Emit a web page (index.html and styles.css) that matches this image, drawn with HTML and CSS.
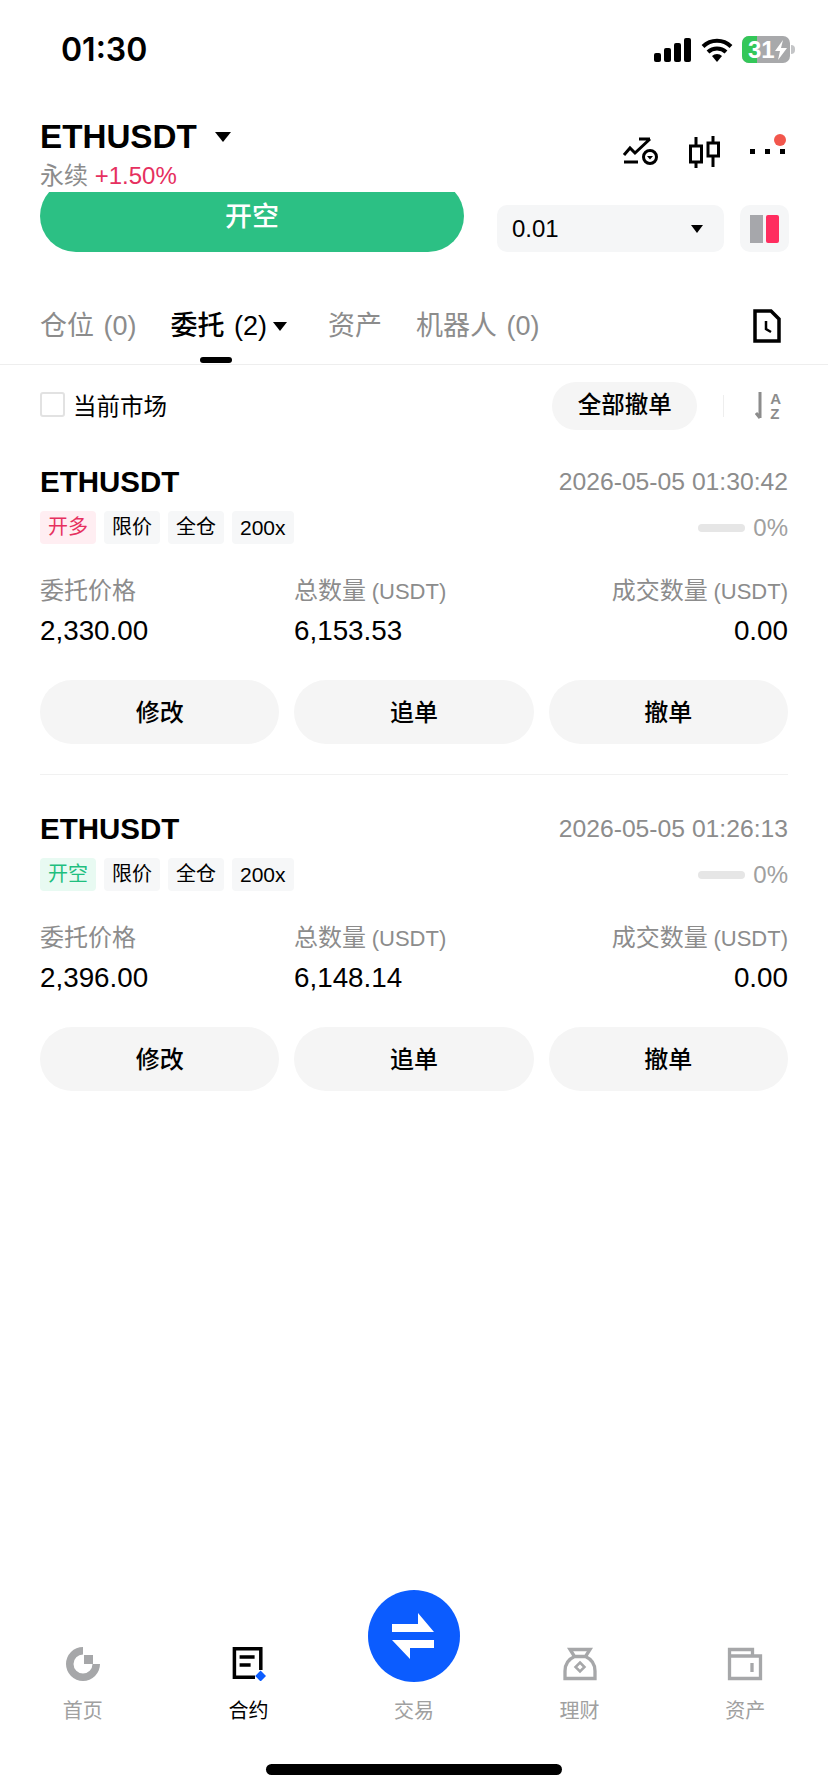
FILE: index.html
```html
<!DOCTYPE html>
<html lang="zh">
<head>
    <meta charset="UTF-8">
    <meta name="viewport" content="width=device-width, initial-scale=1.0">
    <title>ETHUSDT 合约</title>
    <link rel="stylesheet" href="styles.css">
</head>
<body>
    <div class="page">
        <div class="status-bar">
            <span class="time">01:30</span>
            <div class="status-icons">
                <svg width="38" height="24" viewBox="0 0 38 24"><rect x="0" y="15" width="7" height="9" rx="2"/><rect x="10" y="10" width="7" height="14" rx="2"/><rect x="20" y="5" width="7" height="19" rx="2"/><rect x="30" y="0" width="7" height="24" rx="2"/></svg>
                <svg width="32" height="24" viewBox="0 0 32 24"><path d="M16 24l-5-6a7 7 0 0 1 10 0z"/><path d="M2 8.500a20 20 0 0 1 28 0M7 14a13 13 0 0 1 18 0" fill="none" stroke="#000" stroke-width="4"/></svg>
                <div class="battery">
                    <span class="battery-level"></span>
                    <span class="battery-text">31<svg width="12" height="20" viewBox="0 0 12 20"><path d="M8 0L0 11h5l-2 9 9-12H6z" fill="#fff"/></svg></span>
                </div>
                <span class="battery-tip"></span>
            </div>
        </div>

        <div class="header">
            <div>
                <div class="symbol">ETHUSDT<span class="caret caret-lg"></span></div>
                <div class="symbol-sub">永续 <span class="pink">+1.50%</span></div>
            </div>
            <div class="header-icons">
                <svg width="36" height="30" viewBox="0 0 36 30" fill="none" stroke="#000" stroke-width="3"><path d="M2 19l6-7 5 5L28 3M17 3h11M2 26h14"/><circle cx="28" cy="21" r="6.500"/><path d="M25 20h6l-3 3.500z" fill="#000" stroke="none"/></svg>
                <svg width="32" height="32" viewBox="0 0 32 32" fill="none" stroke="#000" stroke-width="3"><rect x="1.500" y="10" width="11" height="16"/><path d="M7 1v9M7 26v6"/><rect x="19" y="7" width="10.500" height="13"/><path d="M24 0v7M24 20v11"/></svg>
                <div class="more">
                    <span class="more-dot"></span><span class="more-dot"></span><span class="more-dot"></span>
                    <span class="red-dot"></span>
                </div>
            </div>
        </div>

        <div class="trade-row">
            <div class="open-clip"><div class="open-btn">开空</div></div>
            <div class="size-select">0.01<span class="caret caret-sm"></span></div>
            <div class="layout-btn"><span class="bar-grey"></span><span class="bar-pink"></span></div>
        </div>

        <div class="tabs">
            <span class="tab">仓位 (0)</span>
            <span class="tab tab-active">委托 (2)<span class="caret caret-md"></span></span>
            <span class="tab">资产</span>
            <span class="tab">机器人 (0)</span>
            <svg class="tab-doc" width="28" height="34" viewBox="0 0 28 34" fill="none" stroke="#000" stroke-width="3.500"><path d="M2 2h16l8 8v22H2z"/><path d="M13 12v8l5 3" stroke-width="2.500"/></svg>
        </div>

        <div class="filter-row">
            <label class="market"><span class="checkbox"></span>当前市场</label>
            <div class="cancel-all">全部撤单</div>
            <span class="filter-sep"></span>
            <div class="sort-icon">
                <svg width="10" height="28" viewBox="0 0 10 28" fill="none" stroke="#8c8c8c" stroke-width="3"><path d="M5 0v26M1 21l4 5"/></svg>
                <div class="sort-letters"><span>A</span><span>Z</span></div>
            </div>
        </div>

        <div class="order">
            <div class="order-top">
                <span class="order-name">ETHUSDT</span>
                <span class="order-date">2026-05-05 01:30:42</span>
            </div>
            <div class="order-tags">
                <span class="tag tag-long">开多</span>
                <span class="tag">限价</span>
                <span class="tag">全仓</span>
                <span class="tag tag-lev">200x</span>
                <span class="progress"></span>
                <span class="percent">0%</span>
            </div>
            <div class="order-grid">
                <span class="label">委托价格</span>
                <span class="label">总数量 <span class="unit">(USDT)</span></span>
                <span class="label right">成交数量 <span class="unit">(USDT)</span></span>
                <span class="value">2,330.00</span>
                <span class="value">6,153.53</span>
                <span class="value right">0.00</span>
            </div>
            <div class="order-btns">
                <div class="order-btn">修改</div>
                <div class="order-btn">追单</div>
                <div class="order-btn">撤单</div>
            </div>
        </div>

        <div class="order order-last">
            <div class="order-top">
                <span class="order-name">ETHUSDT</span>
                <span class="order-date">2026-05-05 01:26:13</span>
            </div>
            <div class="order-tags">
                <span class="tag tag-short">开空</span>
                <span class="tag">限价</span>
                <span class="tag">全仓</span>
                <span class="tag tag-lev">200x</span>
                <span class="progress"></span>
                <span class="percent">0%</span>
            </div>
            <div class="order-grid">
                <span class="label">委托价格</span>
                <span class="label">总数量 <span class="unit">(USDT)</span></span>
                <span class="label right">成交数量 <span class="unit">(USDT)</span></span>
                <span class="value">2,396.00</span>
                <span class="value">6,148.14</span>
                <span class="value right">0.00</span>
            </div>
            <div class="order-btns">
                <div class="order-btn">修改</div>
                <div class="order-btn">追单</div>
                <div class="order-btn">撤单</div>
            </div>
        </div>

        <div class="spacer"></div>

        <div class="tabbar">
            <div class="nav-item">
                <svg class="nav-icon" width="36" height="34" viewBox="0 0 36 34"><path d="M18 0v7.500A9.500 9.500 0 1 0 27.500 17H35A17 17 0 1 1 18 0z" fill="#a6a7a9"/><rect x="19" y="8" width="9" height="9" fill="#a6a7a9"/></svg>
                <span class="nav-label">首页</span>
            </div>
            <div class="nav-item nav-active">
                <svg class="nav-icon" width="36" height="34" viewBox="0 0 36 34"><path d="M30.800 23V1.750H4.400V30.250H25" fill="none" stroke="#000" stroke-width="3.500"/><path d="M9.600 10h15M9.600 18h11" stroke="#000" stroke-width="3.500"/><path d="M30.600 23.500l5.400 5.500-5.400 5.500-5.400-5.500z" fill="#0b5cff"/></svg>
                <span class="nav-label">合约</span>
            </div>
            <div class="nav-item">
                <div class="swap-circle">
                    <svg width="46" height="46" viewBox="0 0 46 46" fill="#fff"><path d="M27 0l16 19H1v-8h26z"/><path d="M19 46L1 27h42v8H19z"/></svg>
                </div>
                <span class="nav-label">交易</span>
            </div>
            <div class="nav-item">
                <svg class="nav-icon" width="36" height="34" viewBox="0 0 36 34" fill="none" stroke="#a6a7a9" stroke-width="3.300"><path d="M8 2.500h20l-4.500 7h-11zM12.500 9.500C7 12 3 17 3 24v7.500h30V24c0-7-4-12-9.500-14.500"/><path d="M18 15.500l4.500 4.500-4.500 4.500-4.500-4.500z" stroke-width="2.500"/></svg>
                <span class="nav-label">理财</span>
            </div>
            <div class="nav-item">
                <svg class="nav-icon" width="36" height="34" viewBox="0 0 36 34" fill="none" stroke="#a6a7a9" stroke-width="3.300"><path d="M2.500 31.500V2.500h23V9h8v22.500zM2.500 9h23M25 16v9"/></svg>
                <span class="nav-label">资产</span>
            </div>
        </div>

        <div class="home-row"><span class="home-bar"></span></div>
    </div>
</body>
</html>
```

FILE: styles.css
```css
body {
    margin: 0;
    padding: 0;
    background-color: #fff;
    color: #000;
    font-family: "Liberation Sans", "Noto Sans CJK SC", sans-serif;
}
.page {
    width: 828px;
    height: 1792px;
    display: flex;
    flex-direction: column;
    overflow: hidden;
}
.status-bar {
    height: 98px;
    flex-shrink: 0;
    display: flex;
    justify-content: space-between;
    align-items: flex-start;
    padding: 32px 33px 0 61px;
    box-sizing: border-box;
}
.time {
    font-family: Inter, sans-serif;
    font-size: 32px;
    font-weight: 600;
    line-height: 36px;
}
.status-icons {
    display: flex;
    align-items: center;
    gap: 9px;
    margin-top: 4px;
}
.battery {
    width: 48px;
    height: 27px;
    background-color: #a8a9ab;
    border-radius: 7px;
    position: relative;
    overflow: hidden;
    display: flex;
    align-items: center;
}
.battery-level {
    position: absolute;
    left: 0;
    top: 0;
    bottom: 0;
    width: 15px;
    background-color: #34c759;
}
.battery-text {
    position: relative;
    display: flex;
    align-items: center;
    padding-left: 6px;
    color: #fff;
    font-size: 24px;
    font-weight: bold;
}
.battery-tip {
    width: 4px;
    height: 9px;
    margin-left: -8px;
    background-color: #c4c5c7;
    border-radius: 0 4px 4px 0;
}
.header {
    height: 94px;
    flex-shrink: 0;
    display: flex;
    justify-content: space-between;
    padding: 18px 38px 0 40px;
    box-sizing: border-box;
}
.symbol {
    display: flex;
    align-items: center;
    font-size: 33.200px;
    font-weight: bold;
    line-height: 42px;
}
.symbol-sub {
    margin-top: 3px;
    font-size: 24px;
    line-height: 30px;
    color: #8c8c8c;
}
.pink {
    color: #e6305f;
}
.caret {
    display: inline-block;
    width: 0;
    height: 0;
    border-style: solid;
    border-color: #000 transparent transparent transparent;
}
.caret-lg {
    border-width: 10px 8px 0 8px;
    margin-left: 18px;
}
.caret-md {
    border-width: 9px 7px 0 7px;
    margin-left: 6px;
}
.caret-sm {
    border-width: 8px 6px 0 6px;
}
.header-icons {
    display: flex;
    align-items: flex-start;
    gap: 31px;
    padding-top: 20px;
}
.more {
    display: flex;
    gap: 10px;
    width: 40px;
    margin-left: -2px;
    padding-top: 13px;
    position: relative;
}
.more-dot {
    width: 5px;
    height: 5px;
    background-color: #000;
}
.red-dot {
    position: absolute;
    left: 24px;
    top: -2px;
    width: 12px;
    height: 12px;
    border-radius: 50%;
    background-color: #f2564c;
}
.trade-row {
    height: 60px;
    flex-shrink: 0;
    display: flex;
    align-items: flex-end;
    padding: 0 39px 0 40px;
}
.open-clip {
    width: 424px;
    height: 60px;
    overflow: hidden;
    margin-right: 33px;
}
.open-btn {
    height: 72px;
    margin-top: -12px;
    border-radius: 36px;
    background-color: #2cc084;
    color: #fff;
    font-size: 27px;
    font-weight: 500;
    text-align: center;
    line-height: 74px;
}
.size-select {
    width: 227px;
    height: 47px;
    box-sizing: border-box;
    padding: 0 21px 0 15px;
    margin-right: 16px;
    display: flex;
    align-items: center;
    justify-content: space-between;
    background-color: #f5f6f7;
    border-radius: 10px;
    font-size: 24px;
}
.layout-btn {
    width: 49px;
    height: 47px;
    display: flex;
    gap: 3px;
    align-items: center;
    justify-content: center;
    background-color: #f5f6f7;
    border-radius: 10px;
}
.bar-grey, .bar-pink {
    width: 13px;
    height: 28px;
}
.bar-grey {
    background-color: #a6a7ab;
}
.bar-pink {
    background-color: #ff2d5f;
    border-radius: 2px;
}
.tabs {
    height: 113px;
    flex-shrink: 0;
    box-sizing: border-box;
    border-bottom: 1px solid #eeeeee;
    padding: 55px 47px 0 40px;
    display: flex;
    align-items: flex-start;
    position: relative;
}
.tab {
    font-size: 27px;
    line-height: 38px;
    color: #8c8c8c;
    margin-right: 34px;
    word-spacing: 2px;
    white-space: nowrap;
}
.tab-active {
    color: #000;
    font-weight: 500;
    margin-right: 41px;
    display: flex;
    align-items: center;
    position: relative;
}
.tab-active::after {
    content: "";
    position: absolute;
    left: 29px;
    bottom: -18px;
    width: 32px;
    height: 6px;
    border-radius: 3px;
    background-color: #000;
}
.tab-doc {
    margin-left: auto;
    margin-top: 2px;
}
.filter-row {
    height: 65px;
    flex-shrink: 0;
    box-sizing: border-box;
    padding: 17px 47px 0 40px;
    display: flex;
    align-items: center;
}
.market {
    display: flex;
    align-items: center;
    gap: 8px;
    font-size: 23.500px;
    margin-right: auto;
    margin-bottom: 3px;
}
.checkbox {
    width: 21px;
    height: 21px;
    border: 2px solid #e2e2e2;
    border-radius: 3px;
}
.cancel-all {
    width: 145px;
    height: 48px;
    line-height: 47px;
    border-radius: 24px;
    background-color: #f5f5f5;
    text-align: center;
    font-size: 23.500px;
    font-weight: 500;
}
.filter-sep {
    width: 1px;
    height: 22px;
    background-color: #eeeeee;
    margin: 0 31px 0 26px;
}
.sort-icon {
    display: flex;
    gap: 5px;
    align-items: center;
}
.sort-letters {
    display: flex;
    flex-direction: column;
    font-size: 15px;
    font-weight: bold;
    line-height: 15px;
    color: #8c8c8c;
}
.order {
    margin: 0 40px;
    padding: 32px 0 30px;
    border-bottom: 1px solid #f1f1f1;
}
.order-last {
    padding-top: 34px;
    border-bottom: none;
}
.order-top {
    height: 40px;
    display: flex;
    justify-content: space-between;
    align-items: center;
}
.order-name {
    font-size: 29.500px;
    font-weight: bold;
}
.order-date {
    font-size: 24.700px;
    color: #8c8c8c;
}
.order-tags {
    height: 33px;
    margin-top: 9px;
    display: flex;
    align-items: center;
    gap: 8px;
}
.tag {
    height: 33px;
    line-height: 33px;
    padding: 0 8px;
    font-size: 20px;
    border-radius: 4px;
    background-color: #f6f7f8;
}
.tag-lev {
    font-size: 21px;
}
.tag-long {
    background-color: #ffeef2;
    color: #e6305f;
}
.tag-short {
    background-color: #e8faf2;
    color: #1fbf7f;
}
.progress {
    width: 47px;
    height: 8px;
    margin-left: auto;
    border-radius: 4px;
    background-color: #e6e6e6;
}
.percent {
    font-size: 24px;
    color: #a0a0a0;
}
.order-grid {
    display: grid;
    grid-template-columns: 254px 1fr auto;
    margin-top: 32px;
}
.label {
    height: 30px;
    line-height: 30px;
    font-size: 24px;
    color: #8c8c8c;
    word-spacing: -1px;
}
.unit {
    font-size: 22px;
}
.value {
    height: 40px;
    line-height: 40px;
    margin-top: 5px;
    font-size: 27.800px;
}
.right {
    text-align: right;
}
.order-btns {
    display: grid;
    grid-template-columns: repeat(3, 1fr);
    gap: 15px;
    margin-top: 29px;
}
.order-btn {
    height: 64px;
    line-height: 66px;
    border-radius: 32px;
    background-color: #f5f5f5;
    text-align: center;
    font-size: 24px;
    font-weight: 500;
}
.spacer {
    flex: 1;
}
.tabbar {
    flex-shrink: 0;
    display: grid;
    grid-template-columns: repeat(5, 1fr);
    align-items: end;
}
.nav-item {
    display: flex;
    flex-direction: column;
    align-items: center;
}
.nav-label {
    height: 28px;
    line-height: 28px;
    margin-top: 16px;
    font-size: 20px;
    color: #a0a0a0;
}
.nav-active .nav-label {
    color: #000;
}
.swap-circle {
    width: 92px;
    height: 92px;
    margin-bottom: -1px;
    border-radius: 50%;
    background-color: #0b5cff;
    display: flex;
    align-items: center;
    justify-content: center;
}
.home-row {
    flex-shrink: 0;
    display: flex;
    justify-content: center;
    padding: 39px 0 17px;
}
.home-bar {
    width: 296px;
    height: 11px;
    border-radius: 6px;
    background-color: #000;
}
```
